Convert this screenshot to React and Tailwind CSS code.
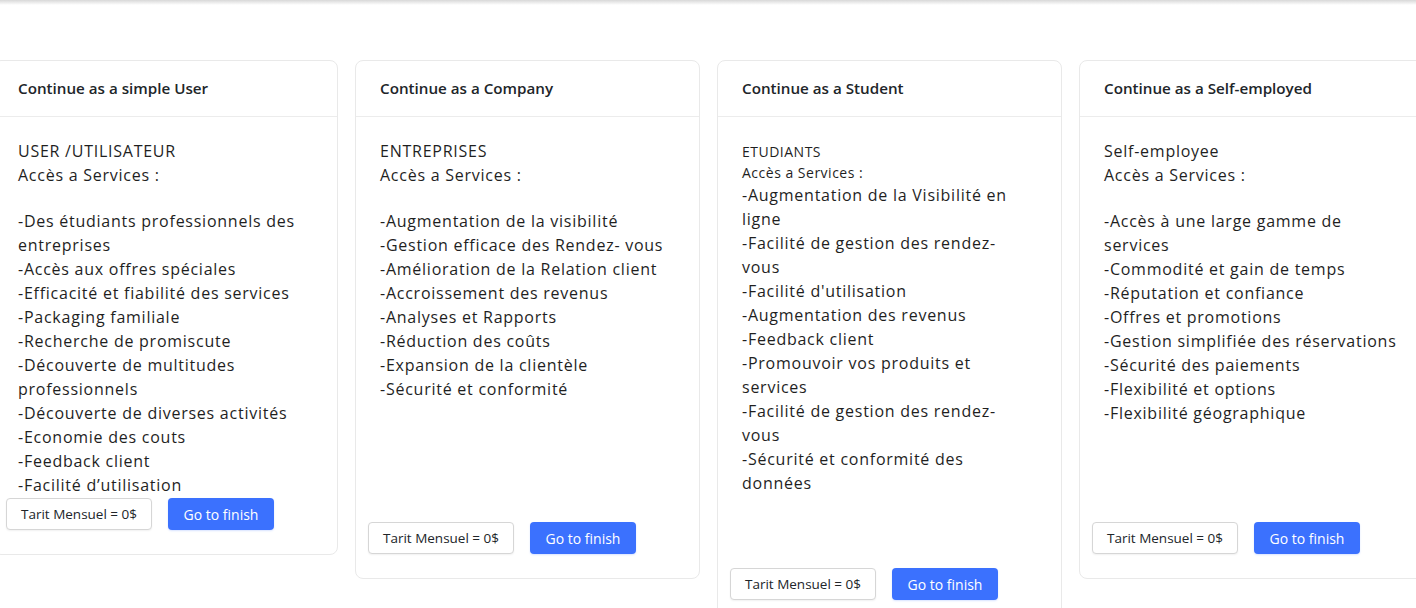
import React from "react";

const cards = [
  {
    title: "Continue as a simple User",
    head: ["USER /UTILISATEUR", "Accès a Services :"],
    small: false,
    lines: [
      "-Des étudiants professionnels des",
      "entreprises",
      "-Accès aux offres spéciales",
      "-Efficacité et fiabilité des services",
      "-Packaging familiale",
      "-Recherche de promiscute",
      "-Découverte de multitudes",
      "professionnels",
      "-Découverte de diverses activités",
      "-Economie des couts",
      "-Feedback client",
      "-Facilité d’utilisation",
    ],
    h: "h-[381px]",
  },
  {
    title: "Continue as a Company",
    head: ["ENTREPRISES", "Accès a Services :"],
    small: false,
    lines: [
      "-Augmentation de la visibilité",
      "-Gestion efficace des Rendez- vous",
      "-Amélioration de la Relation client",
      "-Accroissement des revenus",
      "-Analyses et Rapports",
      "-Réduction des coûts",
      "-Expansion de la clientèle",
      "-Sécurité et conformité",
    ],
    h: "h-[405px]",
  },
  {
    title: "Continue as a Student",
    head: ["ETUDIANTS", "Accès a Services :"],
    small: true,
    lines: [
      "-Augmentation de la Visibilité en",
      "ligne",
      "-Facilité de gestion des rendez-",
      "vous",
      "-Facilité d'utilisation",
      "-Augmentation des revenus",
      "-Feedback client",
      "-Promouvoir vos produits et",
      "services",
      "-Facilité de gestion des rendez-",
      "vous",
      "-Sécurité et conformité des",
      "données",
    ],
    h: "h-[451px]",
  },
  {
    title: "Continue as a Self-employed",
    head: ["Self-employee", "Accès a Services :"],
    small: false,
    lines: [
      "-Accès à une large gamme de",
      "services",
      "-Commodité et gain de temps",
      "-Réputation et confiance",
      "-Offres et promotions",
      "-Gestion simplifiée des réservations",
      "-Sécurité des paiements",
      "-Flexibilité et options",
      "-Flexibilité géographique",
    ],
    h: "h-[405px]",
  },
];

function Card({ c }) {
  return (
    <div className="w-[345px] shrink-0 rounded-lg border border-[#e9e9e9] bg-white">
      <div className="flex h-[56px] items-center border-b border-[#ececec] px-[24px] font-['Open_Sans',sans-serif] text-[15.2px] font-semibold text-[#212529]">
        {c.title}
      </div>
      <div
        className={`${c.h} px-[24px] font-['Open_Sans',sans-serif] text-[16px] leading-[24px] tracking-[0.75px] text-[#1f1f1f] whitespace-nowrap ${
          c.small ? "pt-[24px]" : "pt-[22px]"
        }`}
      >
        {c.small ? (
          <>
            <div className="text-[14px] leading-[22px] tracking-[0.5px]">{c.head[0]}</div>
            <div className="text-[14px] leading-[20px] tracking-[0.5px]">{c.head[1]}</div>
          </>
        ) : (
          <>
            <div>{c.head[0]}</div>
            <div>{c.head[1]}</div>
            <div className="h-[22px]" />
          </>
        )}
        {c.lines.map((t, i) => (
          <div key={i}>{t}</div>
        ))}
      </div>
      <div className="flex items-center gap-[16px] px-[12px] pb-[24px] font-['Open_Sans',sans-serif] text-[13.5px]">
        <div className="flex h-[32px] w-[146px] items-center justify-center rounded-[4px] border border-[#d6d6d6] bg-white text-[#212529] shadow-[0_1px_2px_rgba(0,0,0,0.06)]">
          Tarit Mensuel = 0$
        </div>
        <div className="flex h-[32px] w-[106px] items-center justify-center rounded-[4px] bg-[#3b71fe] text-[14px] text-white shadow-[0_1px_2px_rgba(59,113,254,0.2)]">
          Go to finish
        </div>
      </div>
    </div>
  );
}

export default function App() {
  return (
    <div className="h-[608px] w-[1416px] overflow-hidden bg-white">
      <div className="h-[5px] bg-gradient-to-b from-[#d8d8d8] to-white" />
      <div className="ml-[-7px] mt-[55px] flex items-start gap-[17px]">
        {cards.map((c) => (
          <Card key={c.title} c={c} />
        ))}
      </div>
    </div>
  );
}
